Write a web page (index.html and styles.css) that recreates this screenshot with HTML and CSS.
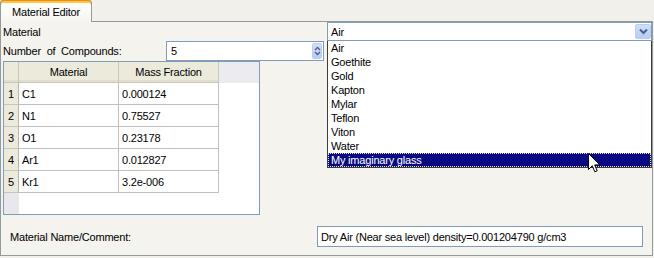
FILE: index.html
```html
<!DOCTYPE html>
<html>
<head>
<meta charset="utf-8">
<link rel="stylesheet" href="styles.css">
</head>
<body>
<div class="tabs"><div class="tab">Material Editor</div></div>
<div class="pane">
  <div class="row-material">
    <span class="lbl">Material</span>
    <div class="combo">
      <span class="combo-val">Air</span>
      <span class="combo-btn"><svg width="9" height="7" viewBox="0 0 9 7"><path d="M1 1.5 L4.5 5 L8 1.5" fill="none" stroke="#4d6185" stroke-width="2"/></svg></span>
      <ul class="dropdown">
        <li>Air</li>
        <li>Goethite</li>
        <li>Gold</li>
        <li>Kapton</li>
        <li>Mylar</li>
        <li>Teflon</li>
        <li>Viton</li>
        <li>Water</li>
        <li class="sel">My imaginary glass</li>
      </ul>
    </div>
  </div>
  <div class="row-spin">
    <span class="lbl">Number&nbsp; of&nbsp; Compounds:</span>
    <div class="spin">
      <span class="spin-val">5</span>
      <span class="spin-btn"><svg width="7" height="10" viewBox="0 0 7 10"><path d="M1 4 L3.5 1.5 L6 4 M1 6 L3.5 8.5 L6 6" fill="none" stroke="#4d6185" stroke-width="1.4"/></svg></span>
    </div>
  </div>
  <div class="frame">
    <div class="grid">
      <div class="hd corner"></div>
      <div class="hd">Material</div>
      <div class="hd">Mass Fraction</div>
      <div class="hd-fill"></div>

      <div class="rh">1</div><div class="cell">C1</div><div class="cell">0.000124</div><div class="fill"></div>
      <div class="rh">2</div><div class="cell">N1</div><div class="cell">0.75527</div><div class="fill"></div>
      <div class="rh">3</div><div class="cell">O1</div><div class="cell">0.23178</div><div class="fill"></div>
      <div class="rh">4</div><div class="cell">Ar1</div><div class="cell">0.012827</div><div class="fill"></div>
      <div class="rh">5</div><div class="cell">Kr1</div><div class="cell">3.2e-006</div><div class="fill"></div>

      <div class="rh-fill"></div><div class="fill wide"></div>
    </div>
  </div>
  <div class="row-comment">
    <span class="lbl2">Material Name/Comment:</span>
    <div class="textbox">Dry Air (Near sea level) density=0.001204790 g/cm3</div>
  </div>
</div>
<svg class="cursor" width="13" height="21" viewBox="0 0 13 21"><path d="M0.5 0.5 L0.5 16.5 L4.3 12.8 L6.8 18.8 L9.2 17.8 L6.7 11.9 L11.8 11.9 Z" fill="#fff" stroke="#000" stroke-width="1" stroke-linejoin="miter"/></svg>
</body>
</html>
```
FILE: styles.css
```css
* { box-sizing: border-box; }
html, body { margin: 0; padding: 0; }
body {
  width: 654px;
  height: 258px;
  overflow: hidden;
  position: relative;
  background: #f1f0ea;
  font-family: "Liberation Sans", Arial, sans-serif;
  font-size: 11px;
  letter-spacing: -0.2px;
  color: #000;
}
.tabs {
  height: 21px;
  display: flex;
  align-items: flex-end;
}
.tab {
  position: relative;
  z-index: 1;
  width: 92px;
  height: 22px;
  margin-bottom: -1px;
  padding-top: 2px;
  background: linear-gradient(#ffffff, #f6f5f0);
  border: 1px solid #919b9c;
  border-top: none;
  border-bottom: none;
  border-radius: 3px 3px 0 0;
  box-shadow: inset 0 1px 0 #e68b2c, inset 0 3px 0 #ffc73c;
  display: flex;
  align-items: center;
  justify-content: center;
}
.pane {
  width: 653px;
  height: 235px;
  border: 1px solid #919b9c;
  background: #f4f3ee;
  padding: 0 1px 8px 1px;
  display: flex;
  flex-direction: column;
}
.row-material {
  display: grid;
  grid-template-columns: 325px 325px;
  height: 19px;
  align-items: center;
}
.lbl { padding-left: 1px; }
.combo {
  position: relative;
  height: 19px;
  border: 1px solid #7f9db9;
  background: #fff;
  display: flex;
  align-items: center;
  padding-left: 3px;
}
.combo-val { flex: 1; }
.combo-btn {
  width: 16px;
  height: 15px;
  border: 1px solid #b9cdf6;
  border-radius: 2px;
  background: linear-gradient(#d2defb, #b8cbf6);
  display: flex;
  align-items: center;
  justify-content: center;
}
.dropdown {
  position: absolute;
  left: -1px;
  right: -1px;
  top: calc(100% + 1px);
  margin: 0;
  padding: 0;
  list-style: none;
  background: #fff;
  border: 1px solid #3c3c3c;
  border-top: none;
  z-index: 5;
}
.dropdown li {
  height: 14px;
  line-height: 14px;
  padding-left: 3px;
}
.dropdown li.sel {
  background: #0a0a82;
  color: #fff;
  outline: 1px dotted #e8e8b0;
  outline-offset: -1px;
}
.row-spin {
  display: grid;
  grid-template-columns: 164px 158px;
  height: 20px;
  align-items: center;
}
.spin {
  height: 20px;
  border: 1px solid #7f9db9;
  background: #fff;
  display: flex;
  align-items: center;
  padding-left: 4px;
}
.spin-val { flex: 1; }
.spin-btn {
  width: 10px;
  height: 16px;
  margin-right: 1px;
  border: 1px solid #b9cdf6;
  border-radius: 2px;
  background: linear-gradient(#d2defb, #b8cbf6);
  display: flex;
  align-items: center;
  justify-content: center;
}
.frame {
  margin-left: 1px;
  width: 257px;
  height: 154px;
  border: 1px solid #7f9db9;
  background: #fff;
}
.grid {
  display: grid;
  grid-template-columns: 15px 100px 100px 40px;
  grid-template-rows: 21px repeat(5, 22px) 21px;
  height: 100%;
}
.hd {
  background: #ebeadb;
  border-right: 1px solid #cbc7b8;
  border-bottom: 1px solid #cbc7b8;
  box-shadow: inset 0 -2px 0 #e2decd;
  display: flex;
  align-items: center;
  justify-content: center;
}
.hd-fill { background: #ebebf0; }
.rh {
  background: #ebeadb;
  border-right: 1px solid #b8b6a8;
  border-bottom: 1px solid #c8c6b8;
  display: flex;
  align-items: center;
  justify-content: center;
}
.cell {
  border-right: 1px solid #c0c0c0;
  border-bottom: 1px solid #c0c0c0;
  padding-left: 3px;
  display: flex;
  align-items: center;
}
.fill { background: #fff; }
.fill.wide { grid-column: 2 / 5; }
.rh-fill { background: #e8e8ec; }
.row-comment {
  margin-top: 11px;
  display: grid;
  grid-template-columns: 315px 326px;
  height: 21px;
  align-items: center;
}
.lbl2 { padding-left: 8px; }
.textbox {
  height: 21px;
  border: 1px solid #7f9db9;
  background: #fff;
  padding-left: 3px;
  display: flex;
  align-items: center;
}
.cursor {
  position: absolute;
  left: 588px;
  top: 153px;
  z-index: 10;
}
```
